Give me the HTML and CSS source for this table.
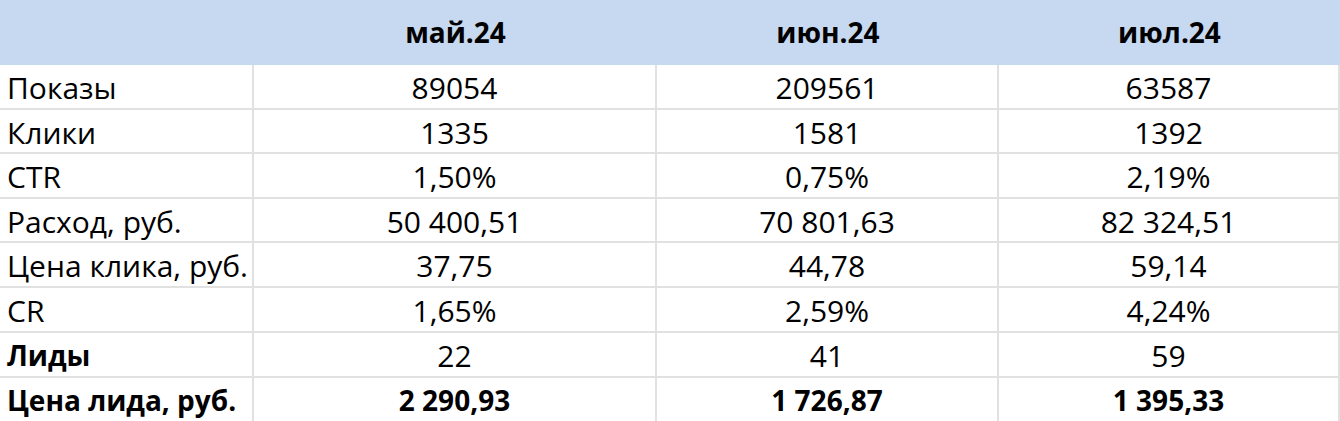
FILE: index.html
```html
<!DOCTYPE html>
<html lang="ru">
<head>
<meta charset="utf-8">
<title>Отчёт</title>
<link rel="stylesheet" href="styles.css">
</head>
<body>
<div class="sheet">
  <div class="hd"></div>
  <div class="hd c">май.24</div>
  <div class="hd c">июн.24</div>
  <div class="hd c">июл.24</div>

  <div class="cell l">Показы</div>
  <div class="cell c">89054</div>
  <div class="cell c">209561</div>
  <div class="cell c">63587</div>

  <div class="cell l">Клики</div>
  <div class="cell c">1335</div>
  <div class="cell c">1581</div>
  <div class="cell c">1392</div>

  <div class="cell l">CTR</div>
  <div class="cell c">1,50%</div>
  <div class="cell c">0,75%</div>
  <div class="cell c">2,19%</div>

  <div class="cell l">Расход, руб.</div>
  <div class="cell c">50 400,51</div>
  <div class="cell c">70 801,63</div>
  <div class="cell c">82 324,51</div>

  <div class="cell l">Цена клика, руб.</div>
  <div class="cell c">37,75</div>
  <div class="cell c">44,78</div>
  <div class="cell c">59,14</div>

  <div class="cell l">CR</div>
  <div class="cell c">1,65%</div>
  <div class="cell c">2,59%</div>
  <div class="cell c">4,24%</div>

  <div class="cell l b">Лиды</div>
  <div class="cell c">22</div>
  <div class="cell c">41</div>
  <div class="cell c">59</div>

  <div class="cell l b">Цена лида, руб.</div>
  <div class="cell c b">2 290,93</div>
  <div class="cell c b">1 726,87</div>
  <div class="cell c b">1 395,33</div>
</div>
</body>
</html>
```

FILE: styles.css
```css
html, body {
  margin: 0;
  padding: 0;
  background: #ffffff;
}

.sheet {
  display: grid;
  grid-template-columns: 254px 403px 342px 341px;
  grid-template-rows: 65px 45px 44px 45px 44px 45px 45px 45px 45px;
  font-family: "Open Sans", Lato, sans-serif;
  font-size: 28px;
  color: #000000;
  white-space: nowrap;
}

.hd {
  background: #c6d9f0;
  font-weight: 700;
  line-height: 65px;
}

.cell {
  box-sizing: border-box;
  border-right: 2px solid #e1e1e1;
  border-bottom: 2px solid #e1e1e1;
  font-size: 30px;
  line-height: 43px;
  padding-top: 1px;
}

.l {
  padding-left: 7px;
}

.c {
  text-align: center;
}

.b {
  font-size: 28px;
  font-weight: 700;
}
```
